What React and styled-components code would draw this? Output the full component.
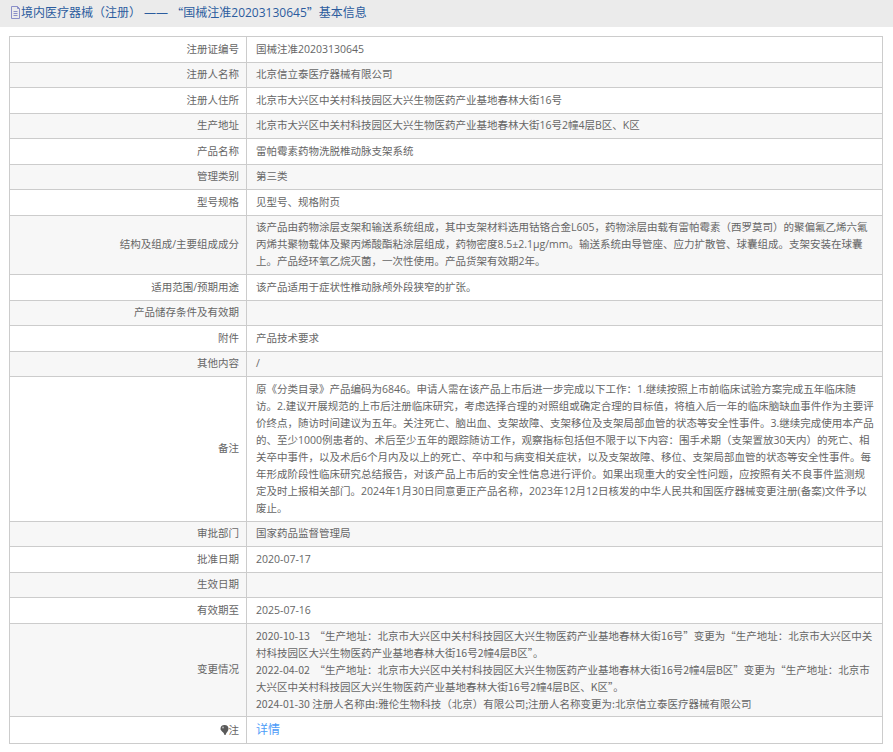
import React from "react"
import styled, { createGlobalStyle } from "styled-components"

const GlobalStyle = createGlobalStyle`
    html, body {
        margin: 0;
        padding: 0;
        background: #fff;
    }
    body {
        font-family: "Open Sans", "Noto Sans CJK SC", sans-serif;
    }
`;
const Page = styled.div`
    width: 893px;
    height: 752px;
    overflow: hidden;
`;
const TitleBar = styled.div`
    display: flex;
    align-items: center;
    box-sizing: border-box;
    height: 27px;
    padding: 0 0 3px 10px;
    background: #ebebeb;
    color: #2b5c9e;
    font-size: 12px;
    white-space: pre;
`;
const DocIcon = styled.svg`
    width: 11px;
    height: 13px;
    flex-shrink: 0;
`;
const InfoTable = styled.table`
    width: 874px;
    margin: 9px 0 0 9px;
    border-collapse: collapse;
    table-layout: fixed;
    font-size: 10.5px;
    line-height: 17px;
    color: #666;
`;
const Row = styled.tr`
    background: ${(props) => (props.$shaded ? "#f7f7f7" : "#fff")};
    height: ${(props) => props.$height || "auto"};
`;
const Label = styled.td`
    width: 229px;
    padding: 3.75px 7px 3.75px 0;
    border: 1px solid #ccc;
    text-align: right;
    vertical-align: middle;
`;
const Value = styled.td`
    padding: 3.75px 7px 3.75px 9px;
    border: 1px solid #ccc;
    vertical-align: middle;
`;
/* curly quotes have to come from the CJK font to get their full width */
const Quote = styled.span`
    font-family: "Noto Sans CJK SC", sans-serif;
`;
const ChangeLine = styled.div`
    font-family: "Noto Sans CJK SC", sans-serif;
`;
const Detail = styled.span`
    color: #4d9cf8;
    font-size: 12px;
`;
const Bulb = styled.svg`
    width: 9px;
    height: 10px;
    vertical-align: -1px;
`;

const rows = [
    ["注册证编号", "国械注准20203130645"],
    ["注册人名称", "北京信立泰医疗器械有限公司"],
    ["注册人住所", "北京市大兴区中关村科技园区大兴生物医药产业基地春林大街16号"],
    ["生产地址", "北京市大兴区中关村科技园区大兴生物医药产业基地春林大街16号2幢4层B区、K区"],
    ["产品名称", "雷帕霉素药物洗脱椎动脉支架系统"],
    ["管理类别", "第三类"],
    ["型号规格", "见型号、规格附页"],
    ["结构及组成/主要组成成分", "该产品由药物涂层支架和输送系统组成，其中支架材料选用钴铬合金L605，药物涂层由载有雷帕霉素（西罗莫司）的聚偏氟乙烯六氟丙烯共聚物载体及聚丙烯酸酯粘涂层组成，药物密度8.5±2.1μg/mm。输送系统由导管座、应力扩散管、球囊组成。支架安装在球囊上。产品经环氧乙烷灭菌，一次性使用。产品货架有效期2年。"],
    ["适用范围/预期用途", "该产品适用于症状性椎动脉颅外段狭窄的扩张。"],
    ["产品储存条件及有效期", ""],
    ["附件", "产品技术要求"],
    ["其他内容", "/"],
    ["备注", "原《分类目录》产品编码为6846。申请人需在该产品上市后进一步完成以下工作：1.继续按照上市前临床试验方案完成五年临床随访。2.建议开展规范的上市后注册临床研究，考虑选择合理的对照组或确定合理的目标值，将植入后一年的临床脑缺血事件作为主要评价终点，随访时间建议为五年。关注死亡、脑出血、支架故障、支架移位及支架局部血管的状态等安全性事件。3.继续完成使用本产品的、至少1000例患者的、术后至少五年的跟踪随访工作，观察指标包括但不限于以下内容：围手术期（支架置放30天内）的死亡、相关卒中事件，以及术后6个月内及以上的死亡、卒中和与病变相关症状，以及支架故障、移位、支架局部血管的状态等安全性事件。每年形成阶段性临床研究总结报告，对该产品上市后的安全性信息进行评价。如果出现重大的安全性问题，应按照有关不良事件监测规定及时上报相关部门。2024年1月30日同意更正产品名称，2023年12月12日核发的中华人民共和国医疗器械变更注册(备案)文件予以废止。"],
    ["审批部门", "国家药品监督管理局"],
    ["批准日期", "2020-07-17"],
    ["生效日期", ""],
    ["有效期至", "2025-07-16"],
];

const changes = [
    "2020-10-13\u00a0 “生产地址：北京市大兴区中关村科技园区大兴生物医药产业基地春林大街16号”变更为“生产地址：北京市大兴区中关村科技园区大兴生物医药产业基地春林大街16号2幢4层B区”。",
    "2022-04-02\u00a0 “生产地址：北京市大兴区中关村科技园区大兴生物医药产业基地春林大街16号2幢4层B区”变更为“生产地址：北京市大兴区中关村科技园区大兴生物医药产业基地春林大街16号2幢4层B区、K区”。",
    "2024-01-30 注册人名称由:雅伦生物科技（北京）有限公司;注册人名称变更为:北京信立泰医疗器械有限公司",
];

const App = () => {
    return (
        <Page>
            <GlobalStyle />
            <TitleBar>
                <DocIcon viewBox="0 0 11 13" fill="none" stroke="#8a8fc8" strokeWidth="1">
                    <path d="M1.5 .5h6l2 2v10h-8z" />
                    <path d="M7.5 .5v2h2M3.5 5.5h4M3.5 7.5h4M3.5 9.5h4" />
                </DocIcon>
                境内医疗器械（注册） —— <Quote>“</Quote>国械注准20203130645<Quote>”</Quote>基本信息
            </TitleBar>
            <InfoTable>
                <tbody>
                    {rows.map(([label, value], i) => (
                        <Row key={label} $shaded={i % 2 === 1}>
                            <Label>{label}</Label>
                            <Value>{value}</Value>
                        </Row>
                    ))}
                    <Row $shaded>
                        <Label>变更情况</Label>
                        <Value>
                            {changes.map((change) => (
                                <ChangeLine key={change}>{change}</ChangeLine>
                            ))}
                        </Value>
                    </Row>
                    <Row $height="27px">
                        <Label>
                            <Bulb viewBox="0 0 9 10">
                                <path d="M4.5 0a4 4 0 0 1 4 4c0 2-2 3-3 6h-1C4 7 .5 6 .5 4a4 4 0 0 1 4-4z" fill="#5a5a5a" />
                                <circle cx="3" cy="2.6" r="1" fill="#b5b5b5" />
                            </Bulb>
                            注
                        </Label>
                        <Value>
                            <Detail>详情</Detail>
                        </Value>
                    </Row>
                </tbody>
            </InfoTable>
        </Page>
    )
}
export default App
